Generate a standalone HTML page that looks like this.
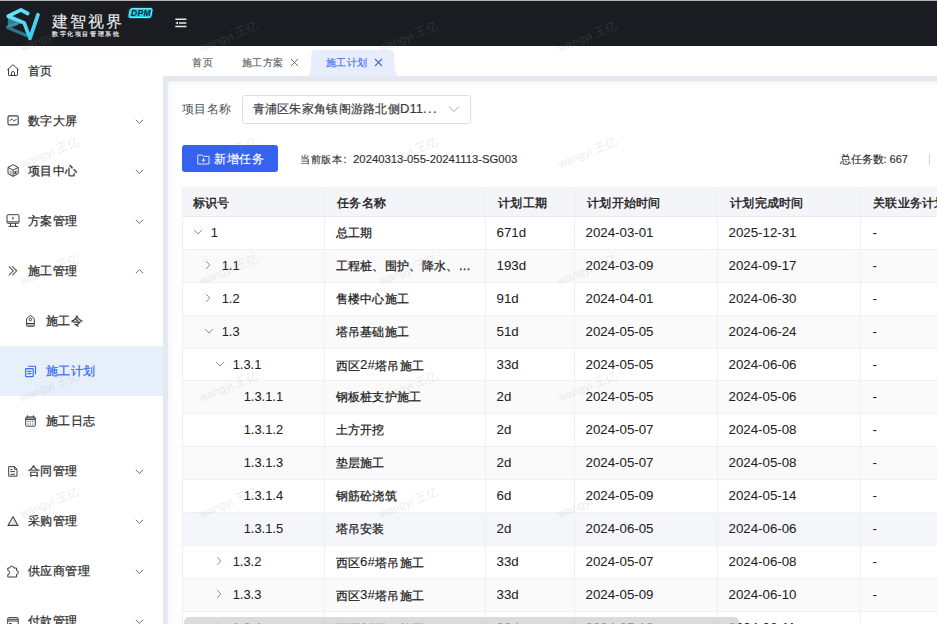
<!DOCTYPE html>
<html><head><meta charset="utf-8">
<style>
*{box-sizing:border-box;margin:0;padding:0}
html,body{width:937px;height:624px;overflow:hidden;background:#fff;font-family:"Liberation Sans",sans-serif;color:#303133}
.abs{position:absolute}
#topline{left:0;top:0;width:937px;height:1px;background:#b4b4b4}
#header{left:0;top:1px;width:937px;height:45px;background:#1a1c21;z-index:5}
#hsep{left:163px;top:1px;width:1px;height:45px;background:#1e2025;z-index:6}
#sline{left:0;top:48px;width:163px;height:1px;background:#fbfbfb}
#side{left:0;top:45px;width:163px;height:579px;background:#fff}
.mi{position:absolute;left:0;width:163px;height:50px;font-size:12.25px;letter-spacing:0.4px;color:#2b2d30;-webkit-text-stroke:0.25px currentColor}
.mi .t{position:absolute;left:28px;top:0;line-height:50px;white-space:nowrap}
.mi svg.ic{position:absolute;left:0;top:0;width:40px;height:50px}
.mi svg.ch{position:absolute;left:135px;top:21px;width:9px;height:9px}
.sub .t{left:46px}
.mi.act{background:#e6effa;color:#3a6cf4}
#content{left:163px;top:45px;width:774px;height:579px;background:#e4e9f0}
#tabs{left:163px;top:45px;width:774px;height:31px;background:#fff}
.tab{position:absolute;top:50px;height:26px;font-size:10px;letter-spacing:0.55px;-webkit-text-stroke:0.15px currentColor;line-height:26px;color:#5a5e66;white-space:nowrap}
#card{left:168px;top:81px;width:780px;height:560px;background:linear-gradient(to right,#f8f8f9 0,#fbfbfc 3px,#fdfdfd 6px,#fff 9px);border-radius:3px 0 0 0}
#cardtop{left:168px;top:81px;width:780px;height:5px;background:linear-gradient(to bottom,rgba(240,241,243,0.8),rgba(255,255,255,0));border-radius:3px 0 0 0}
.thead{background:#f3f5f9;border-bottom:1px solid #e8ebf2}
.th{font-size:12.25px;letter-spacing:0.3px;line-height:32px;color:#1f2022;white-space:nowrap;-webkit-text-stroke:0.4px currentColor}
.tr{left:182px;width:760px;height:32.875px;border-bottom:1px solid #eef1f6;background:#fff}
.tr.stripe{background:#fafafa}
.tr.hover{background:#f4f6fa}
.td{font-size:12.25px;letter-spacing:0.3px;line-height:33px;color:#222;white-space:nowrap;-webkit-text-stroke:0.25px currentColor}
.n{font-size:13px}
.td .n{position:relative;top:-1px;letter-spacing:0;font-size:13.3px;-webkit-text-stroke:0.05px currentColor}
.vb{top:187px;width:1px;height:437px;background:#edf0f5}
#wm{position:absolute;left:0;top:0;width:937px;height:624px;pointer-events:none;overflow:hidden;z-index:10}
.wmk{position:absolute;font-size:11.5px;line-height:11px;white-space:nowrap;color:rgba(150,150,150,0.2);transform:rotate(-22deg);transform-origin:0 9.3px}

</style></head><body>
<div id="topline" class="abs"></div>
<div id="header" class="abs">
  <svg class="abs" style="left:0;top:-1px" width="48" height="46" viewBox="0 0 48 46">
    <defs>
      <linearGradient id="lg" x1="0" y1="0" x2="1" y2="1"><stop offset="0" stop-color="#6ee8f8"/><stop offset="1" stop-color="#36c8ec"/></linearGradient>
      <linearGradient id="lg2" x1="0" y1="0" x2="1" y2="0.3"><stop offset="0" stop-color="#3aa6bd" stop-opacity="0.6"/><stop offset="1" stop-color="#2f97ad" stop-opacity="0.75"/></linearGradient>
    </defs>
    <path d="M8,16.5 L23.5,22.8 L7.6,27.4 Z" fill="#3aa9c0" opacity="0.7"/>
    <path d="M18,23.2 L7.6,27.4 L27,35.8" fill="none" stroke="url(#lg2)" stroke-width="3.3" stroke-linejoin="round"/>
    <path d="M27.7,13.5 L21,9.9 L8.2,16.2 L24.2,22.9 L30,38.3 L38,14.7" fill="none" stroke="url(#lg)" stroke-width="3.7" stroke-linejoin="round" stroke-linecap="round"/>
  </svg>
  <div class="abs" style="left:51.5px;top:11px;font-size:16px;line-height:20px;color:#eef0f2;letter-spacing:2.1px;-webkit-text-stroke:0.1px #eef0f2;white-space:nowrap">建智视界</div>
  <div class="abs" style="left:52px;top:29px;font-size:6px;line-height:8px;color:#e4e6ea;letter-spacing:1.6px;-webkit-text-stroke:0.2px #e4e6ea;white-space:nowrap">数字化项目管理系统</div>
  <div class="abs" style="left:129.3px;top:7px;width:22.5px;height:10px;background:#20cfe8;border:1px solid #6ef0ff;border-radius:2.5px;transform:skewX(-10deg);box-shadow:0 0 2px rgba(80,230,255,0.6)"></div>
  <div class="abs" style="left:130px;top:7px;width:22px;height:10px;font-size:8.5px;line-height:10px;font-weight:bold;font-style:italic;color:#06262e;text-align:center;letter-spacing:0.3px">DPM</div>
  <svg class="abs" style="left:174px;top:16px" width="14" height="13" viewBox="0 0 14 13">
    <path d="M1.3,2.3 H12.4 M5,5.9 H12.4 M1.3,9.5 H12.4" stroke="#e6e6e6" stroke-width="1.5"/>
    <path d="M4,4.4 L1.3,5.9 L4,7.4 Z" fill="#e6e6e6"/>
  </svg>
</div>
<div id="hsep" class="abs"></div>

<div id="side" class="abs">
<div class="mi" style="top:1px"><svg class="ic" width="40" height="50" viewBox="0 0 40 50"><path d="M7.3,23.9 L13,18.7 L18.7,23.9 M8.5,22.8 V28.9 Q8.5,29.5 9.1,29.5 H16.9 Q17.5,29.5 17.5,28.9 V22.8 M11.5,29.5 V26.9 A1.5,1.4 0 0 1 14.5,26.9 V29.5" fill="none" stroke="#3c3f44" stroke-width="1"/></svg><span class="t">首页</span></div>
<div class="mi" style="top:51px"><svg class="ic" width="40" height="50" viewBox="0 0 40 50"><rect x="8" y="19.8" width="10.2" height="9.1" rx="1.5" fill="none" stroke="#3c3f44" stroke-width="1.15"/><path d="M10,24.9 C11,22.6 12.1,22.6 13,24.1 C13.9,25.6 15.2,25.2 16.4,22.9" fill="none" stroke="#3c3f44" stroke-width="1"/></svg><span class="t">数字大屏</span><svg class="ch" viewBox="0 0 9 9"><path d="M0.8,2.8 L4.5,6.3 L8.2,2.8" fill="none" stroke="#6b6e73" stroke-width="1"/></svg></div>
<div class="mi" style="top:101px"><svg class="ic" width="40" height="50" viewBox="0 0 40 50"><path d="M13.1,18.6 L18.2,21.4 V27.6 L13.1,30.4 L8,27.6 V21.4 Z M8,21.4 L13.1,24.2 L18.2,21.4 M13.1,24.2 V30.4" fill="none" stroke="#3c3f44" stroke-width="1"/><path d="M14.4,25.6 L16.6,24.4 V27.2 L14.4,28.4 Z" fill="#3c3f44"/><path d="M11.6,25.6 C10,24.8 9.6,26.6 10.6,27 C11.6,27.4 11.4,28.6 9.8,28" fill="none" stroke="#3c3f44" stroke-width="0.7"/></svg><span class="t">项目中心</span><svg class="ch" viewBox="0 0 9 9"><path d="M0.8,2.8 L4.5,6.3 L8.2,2.8" fill="none" stroke="#6b6e73" stroke-width="1"/></svg></div>
<div class="mi" style="top:151px"><svg class="ic" width="40" height="50" viewBox="0 0 40 50"><rect x="7" y="18.7" width="12" height="8.6" rx="1" fill="none" stroke="#3c3f44" stroke-width="1"/><path d="M7.2,25.8 H18.8" stroke="#3c3f44" stroke-width="1.4" opacity="0.7"/><path d="M10.5,27.3 V30.2 M15.5,27.3 V30.2 M8.5,30.4 H18" fill="none" stroke="#3c3f44" stroke-width="1"/><path d="M12.2,20.6 L14.4,22.2 L12.2,23.8 Z" fill="#3c3f44" opacity="0.85"/></svg><span class="t">方案管理</span><svg class="ch" viewBox="0 0 9 9"><path d="M0.8,2.8 L4.5,6.3 L8.2,2.8" fill="none" stroke="#6b6e73" stroke-width="1"/></svg></div>
<div class="mi" style="top:201px"><svg class="ic" width="40" height="50" viewBox="0 0 40 50"><path d="M8.8,20.3 L13.3,24.85 L8.8,29.4 M12.2,20.3 L16.7,24.85 L12.2,29.4" fill="none" stroke="#55585d" stroke-width="1.1"/></svg><span class="t">施工管理</span><svg class="ch" viewBox="0 0 9 9"><path d="M0.8,6.3 L4.5,2.8 L8.2,6.3" fill="none" stroke="#6b6e73" stroke-width="1"/></svg></div>
<div class="mi sub" style="top:251px"><svg class="ic" width="40" height="50" viewBox="0 0 40 50"><path d="M26.6,29.7 V22.6 L30.45,19.4 L34.3,22.6 V29.7 Q34.3,30.3 33.7,30.3 H27.2 Q26.6,30.3 26.6,29.7 Z M26.6,27.5 H34.3" fill="none" stroke="#3c3f44" stroke-width="1"/><rect x="27" y="27.8" width="6.9" height="2.2" fill="#3c3f44" opacity="0.35"/><circle cx="30.4" cy="23.4" r="1.3" fill="none" stroke="#3c3f44" stroke-width="1"/></svg><span class="t">施工令</span></div>
<div class="mi sub act" style="top:301px"><svg class="ic" width="40" height="50" viewBox="0 0 40 50"><rect x="25.7" y="22.6" width="7.5" height="8" rx="0.6" fill="none" stroke="#3a6cf4" stroke-width="1.2"/><path d="M28.2,20.2 H34.9 Q35.5,20.2 35.5,20.8 V28.2 M27.4,25.4 H31.4 M27.4,27.6 H31.4" fill="none" stroke="#3a6cf4" stroke-width="1.1"/></svg><span class="t">施工计划</span></div>
<div class="mi sub" style="top:351px"><svg class="ic" width="40" height="50" viewBox="0 0 40 50"><rect x="25.7" y="20.9" width="9.6" height="9.3" rx="0.8" fill="none" stroke="#3c3f44" stroke-width="1"/><rect x="26" y="21.2" width="9" height="2.4" fill="#3c3f44" opacity="0.55"/><path d="M25.7,23.6 H35.3 M27.6,19.3 V21.5 M33.4,19.3 V21.5" fill="none" stroke="#3c3f44" stroke-width="1"/><path d="M27.4,25 h1.3v1h-1.3z M29.7,25 h1.3v1h-1.3z M32.1,25 h1.3v1h-1.3z M27.4,27.4 h1.3v1h-1.3z M29.7,27.4 h1.3v1h-1.3z M32.1,27.4 h1.3v1h-1.3z" fill="#3c3f44" opacity="0.8"/></svg><span class="t">施工日志</span></div>
<div class="mi" style="top:401px"><svg class="ic" width="40" height="50" viewBox="0 0 40 50"><path d="M8.7,20.6 H14.4 L17,23.2 V30.2 H8.7 Z M14.4,20.6 V23.2 H17" fill="none" stroke="#3c3f44" stroke-width="1"/><path d="M10.3,23.4 H12.5 M10.3,25.6 H14.9 M10.3,28.3 H14.9" fill="none" stroke="#3c3f44" stroke-width="1"/></svg><span class="t">合同管理</span><svg class="ch" viewBox="0 0 9 9"><path d="M0.8,2.8 L4.5,6.3 L8.2,2.8" fill="none" stroke="#6b6e73" stroke-width="1"/></svg></div>
<div class="mi" style="top:451px"><svg class="ic" width="40" height="50" viewBox="0 0 40 50"><path d="M13,20.7 L18,29.4 H8 Z" fill="none" stroke="#3c3f44" stroke-width="1.1" stroke-linejoin="round"/><path d="M13.6,23.8 L15.2,27.6 H12.2 Z" fill="none" stroke="#3c3f44" stroke-width="0.6" opacity="0.35"/></svg><span class="t">采购管理</span><svg class="ch" viewBox="0 0 9 9"><path d="M0.8,2.8 L4.5,6.3 L8.2,2.8" fill="none" stroke="#6b6e73" stroke-width="1"/></svg></div>
<div class="mi" style="top:501px"><svg class="ic" width="40" height="50" viewBox="0 0 40 50"><path d="M7.8,22 H9.8 A1.9,1.9 0 1 1 13.6,22 H16.5 V24.6 A1.9,1.9 0 1 1 16.5,28.4 V31 H7.8 V28.4 A1.9,1.9 0 1 0 7.8,24.6 Z" fill="none" stroke="#3c3f44" stroke-width="1" stroke-linejoin="round"/></svg><span class="t">供应商管理</span><svg class="ch" viewBox="0 0 9 9"><path d="M0.8,2.8 L4.5,6.3 L8.2,2.8" fill="none" stroke="#6b6e73" stroke-width="1"/></svg></div>
<div class="mi" style="top:551px"><svg class="ic" width="40" height="50" viewBox="0 0 40 50"><rect x="7.7" y="21.6" width="10.5" height="10" rx="1" fill="none" stroke="#3c3f44" stroke-width="1"/><path d="M7.7,23.3 H18.2 M7.7,25 H18.2" fill="none" stroke="#3c3f44" stroke-width="1"/><rect x="9.1" y="27" width="2.6" height="1.6" fill="#3c3f44"/></svg><span class="t">付款管理</span><svg class="ch" viewBox="0 0 9 9"><path d="M0.8,2.8 L4.5,6.3 L8.2,2.8" fill="none" stroke="#6b6e73" stroke-width="1"/></svg></div>
</div>
<div id="sline" class="abs"></div>
<div id="content" class="abs"></div>
<div id="tabs" class="abs"></div>
<svg class="abs" style="left:305px;top:49px" width="98" height="28" viewBox="0 0 98 28">
  <path d="M3,27 C4.5,26 5.5,22 6,17 L6.5,5 Q6.8,1 10.5,1 H85 Q88.7,1 89,5 L89.5,17 C90,22 91.5,26 93.5,27 Z" fill="#e8edfd"/>
</svg>
<div class="tab" style="left:192px">首页</div>
<div class="tab" style="left:241.5px">施工方案</div>
<svg class="abs" style="left:290px;top:58px" width="9" height="9" viewBox="0 0 9 9"><path d="M1,1 L8,8 M8,1 L1,8" stroke="#6a6d73" stroke-width="1"/></svg>
<div class="tab" style="left:325.5px;color:#3b6cf2">施工计划</div>
<svg class="abs" style="left:374px;top:58px" width="9" height="9" viewBox="0 0 9 9"><path d="M1,1 L8,8 M8,1 L1,8" stroke="#3b6cf2" stroke-width="1.1"/></svg>
<div id="card" class="abs"></div>
<div id="cardtop" class="abs"></div>
<div class="abs" style="left:181.5px;top:95px;letter-spacing:0.6px;font-size:12.25px;line-height:28px;color:#505358;white-space:nowrap">项目名称</div>
<div class="abs" style="left:242px;top:95px;width:229px;height:28.5px;border:1px solid #dcdfe6;border-radius:3px;background:#fff"></div>
<div class="abs" style="left:252.5px;top:95px;letter-spacing:0.3px;font-size:12.25px;line-height:28px;color:#3a3d42;white-space:nowrap;-webkit-text-stroke:0.2px currentColor">青浦区朱家角镇阁游路北侧<span class="n" style="letter-spacing:0">D11<span style="letter-spacing:1.4px">...</span></span></div>
<svg class="abs" style="left:448px;top:104px" width="12" height="10" viewBox="0 0 12 10"><path d="M1,2.5 L6,7.5 L11,2.5" fill="none" stroke="#a8abb2" stroke-width="1"/></svg>
<div class="abs" style="left:182px;top:145px;width:96px;height:27px;border-radius:3px;background:#3563f0"></div>
<svg class="abs" style="left:196.5px;top:153.5px" width="13" height="11" viewBox="0 0 13 11"><path d="M0.8,1 H5 L6.2,2.3 H12 V10 H0.8 Z" fill="none" stroke="#e6ecff" stroke-width="1"/><path d="M6.5,4.2 V8.2 M4.5,6.2 H8.5" stroke="#e6ecff" stroke-width="1"/></svg>
<div class="abs" style="left:214px;top:146px;letter-spacing:0.5px;font-size:12.25px;line-height:27px;color:#fff;-webkit-text-stroke:0.15px #fff;white-space:nowrap">新增任务</div>
<div class="abs" style="left:300px;top:146px;font-size:10.4px;letter-spacing:0.5px;line-height:27px;color:#2f3033;white-space:nowrap;-webkit-text-stroke:0.15px currentColor">当前版本<span style="font-size:11px;margin-left:1.5px;letter-spacing:0">:</span><span style="font-size:11.3px;margin-left:6.5px;letter-spacing:0">20240313-055-20241113-SG003</span></div>
<div class="abs" style="left:839.5px;top:146px;font-size:10.8px;line-height:27px;color:#2f3033;white-space:nowrap;-webkit-text-stroke:0.15px currentColor">总任务数<span style="font-size:11px">: 667</span></div>
<div class="abs" style="left:929px;top:154px;width:1px;height:11px;background:#cfd2d8"></div>

<div id="tbl">
<div class="abs thead" style="left:182px;top:187px;width:760px;height:30px"></div>
<div class="abs th" style="left:192.5px;top:187px">标识号</div>
<div class="abs th" style="left:337px;top:187px">任务名称</div>
<div class="abs th" style="left:498px;top:187px">计划工期</div>
<div class="abs th" style="left:587px;top:187px">计划开始时间</div>
<div class="abs th" style="left:730px;top:187px">计划完成时间</div>
<div class="abs th" style="left:873px;top:187px">关联业务计划</div>
<div class="abs tr" style="top:217.000px"></div>
<div class="abs tr stripe" style="top:249.875px"></div>
<div class="abs tr" style="top:282.750px"></div>
<div class="abs tr stripe" style="top:315.625px"></div>
<div class="abs tr" style="top:348.500px"></div>
<div class="abs tr stripe" style="top:381.375px"></div>
<div class="abs tr" style="top:414.250px"></div>
<div class="abs tr stripe" style="top:447.125px"></div>
<div class="abs tr" style="top:480.000px"></div>
<div class="abs tr stripe hover" style="top:512.875px"></div>
<div class="abs tr" style="top:545.750px"></div>
<div class="abs tr stripe" style="top:578.625px"></div>
<div class="abs tr" style="top:611.500px"></div>
<svg class="abs tchev" style="left:192.70px;top:227.00px" width="10" height="10" viewBox="0 0 10 10"><path d="M1.2,3 L5,7 L8.8,3" fill="none" stroke="#8a8d92" stroke-width="1"/></svg><div class="abs td" style="left:210.70px;top:217.000px"><span class="n" style="font-size:12.9px">1</span></div><div class="abs td" style="left:335.5px;top:217.000px">总工期</div><div class="abs td" style="left:496.5px;top:217.000px"><span class="n">671d</span></div><div class="abs td" style="left:585.5px;top:217.000px"><span class="n">2024-03-01</span></div><div class="abs td" style="left:728.5px;top:217.000px"><span class="n">2025-12-31</span></div><div class="abs td" style="left:872.5px;top:217.000px"><span class="n">-</span></div>
<svg class="abs tchev" style="left:203.20px;top:259.88px" width="10" height="10" viewBox="0 0 10 10"><path d="M3.2,1.2 L6.8,5 L3.2,8.8" fill="none" stroke="#8a8d92" stroke-width="1"/></svg><div class="abs td" style="left:221.70px;top:249.875px"><span class="n" style="font-size:12.9px">1.1</span></div><div class="abs td" style="left:335.5px;top:249.875px">工程桩、围护、降水、…</div><div class="abs td" style="left:496.5px;top:249.875px"><span class="n">193d</span></div><div class="abs td" style="left:585.5px;top:249.875px"><span class="n">2024-03-09</span></div><div class="abs td" style="left:728.5px;top:249.875px"><span class="n">2024-09-17</span></div><div class="abs td" style="left:872.5px;top:249.875px"><span class="n">-</span></div>
<svg class="abs tchev" style="left:203.20px;top:292.75px" width="10" height="10" viewBox="0 0 10 10"><path d="M3.2,1.2 L6.8,5 L3.2,8.8" fill="none" stroke="#8a8d92" stroke-width="1"/></svg><div class="abs td" style="left:221.70px;top:282.750px"><span class="n" style="font-size:12.9px">1.2</span></div><div class="abs td" style="left:335.5px;top:282.750px">售楼中心施工</div><div class="abs td" style="left:496.5px;top:282.750px"><span class="n">91d</span></div><div class="abs td" style="left:585.5px;top:282.750px"><span class="n">2024-04-01</span></div><div class="abs td" style="left:728.5px;top:282.750px"><span class="n">2024-06-30</span></div><div class="abs td" style="left:872.5px;top:282.750px"><span class="n">-</span></div>
<svg class="abs tchev" style="left:203.70px;top:325.62px" width="10" height="10" viewBox="0 0 10 10"><path d="M1.2,3 L5,7 L8.8,3" fill="none" stroke="#8a8d92" stroke-width="1"/></svg><div class="abs td" style="left:221.70px;top:315.625px"><span class="n" style="font-size:12.9px">1.3</span></div><div class="abs td" style="left:335.5px;top:315.625px">塔吊基础施工</div><div class="abs td" style="left:496.5px;top:315.625px"><span class="n">51d</span></div><div class="abs td" style="left:585.5px;top:315.625px"><span class="n">2024-05-05</span></div><div class="abs td" style="left:728.5px;top:315.625px"><span class="n">2024-06-24</span></div><div class="abs td" style="left:872.5px;top:315.625px"><span class="n">-</span></div>
<svg class="abs tchev" style="left:214.70px;top:358.50px" width="10" height="10" viewBox="0 0 10 10"><path d="M1.2,3 L5,7 L8.8,3" fill="none" stroke="#8a8d92" stroke-width="1"/></svg><div class="abs td" style="left:232.70px;top:348.500px"><span class="n" style="font-size:12.9px">1.3.1</span></div><div class="abs td" style="left:335.5px;top:348.500px">西区<span class="n">2#</span>塔吊施工</div><div class="abs td" style="left:496.5px;top:348.500px"><span class="n">33d</span></div><div class="abs td" style="left:585.5px;top:348.500px"><span class="n">2024-05-05</span></div><div class="abs td" style="left:728.5px;top:348.500px"><span class="n">2024-06-06</span></div><div class="abs td" style="left:872.5px;top:348.500px"><span class="n">-</span></div>
<div class="abs td" style="left:243.70px;top:381.375px"><span class="n" style="font-size:12.9px">1.3.1.1</span></div><div class="abs td" style="left:335.5px;top:381.375px">钢板桩支护施工</div><div class="abs td" style="left:496.5px;top:381.375px"><span class="n">2d</span></div><div class="abs td" style="left:585.5px;top:381.375px"><span class="n">2024-05-05</span></div><div class="abs td" style="left:728.5px;top:381.375px"><span class="n">2024-05-06</span></div><div class="abs td" style="left:872.5px;top:381.375px"><span class="n">-</span></div>
<div class="abs td" style="left:243.70px;top:414.250px"><span class="n" style="font-size:12.9px">1.3.1.2</span></div><div class="abs td" style="left:335.5px;top:414.250px">土方开挖</div><div class="abs td" style="left:496.5px;top:414.250px"><span class="n">2d</span></div><div class="abs td" style="left:585.5px;top:414.250px"><span class="n">2024-05-07</span></div><div class="abs td" style="left:728.5px;top:414.250px"><span class="n">2024-05-08</span></div><div class="abs td" style="left:872.5px;top:414.250px"><span class="n">-</span></div>
<div class="abs td" style="left:243.70px;top:447.125px"><span class="n" style="font-size:12.9px">1.3.1.3</span></div><div class="abs td" style="left:335.5px;top:447.125px">垫层施工</div><div class="abs td" style="left:496.5px;top:447.125px"><span class="n">2d</span></div><div class="abs td" style="left:585.5px;top:447.125px"><span class="n">2024-05-07</span></div><div class="abs td" style="left:728.5px;top:447.125px"><span class="n">2024-05-08</span></div><div class="abs td" style="left:872.5px;top:447.125px"><span class="n">-</span></div>
<div class="abs td" style="left:243.70px;top:480.000px"><span class="n" style="font-size:12.9px">1.3.1.4</span></div><div class="abs td" style="left:335.5px;top:480.000px">钢筋砼浇筑</div><div class="abs td" style="left:496.5px;top:480.000px"><span class="n">6d</span></div><div class="abs td" style="left:585.5px;top:480.000px"><span class="n">2024-05-09</span></div><div class="abs td" style="left:728.5px;top:480.000px"><span class="n">2024-05-14</span></div><div class="abs td" style="left:872.5px;top:480.000px"><span class="n">-</span></div>
<div class="abs td" style="left:243.70px;top:512.875px"><span class="n" style="font-size:12.9px">1.3.1.5</span></div><div class="abs td" style="left:335.5px;top:512.875px">塔吊安装</div><div class="abs td" style="left:496.5px;top:512.875px"><span class="n">2d</span></div><div class="abs td" style="left:585.5px;top:512.875px"><span class="n">2024-06-05</span></div><div class="abs td" style="left:728.5px;top:512.875px"><span class="n">2024-06-06</span></div><div class="abs td" style="left:872.5px;top:512.875px"><span class="n">-</span></div>
<svg class="abs tchev" style="left:214.20px;top:555.75px" width="10" height="10" viewBox="0 0 10 10"><path d="M3.2,1.2 L6.8,5 L3.2,8.8" fill="none" stroke="#8a8d92" stroke-width="1"/></svg><div class="abs td" style="left:232.70px;top:545.750px"><span class="n" style="font-size:12.9px">1.3.2</span></div><div class="abs td" style="left:335.5px;top:545.750px">西区<span class="n">6#</span>塔吊施工</div><div class="abs td" style="left:496.5px;top:545.750px"><span class="n">33d</span></div><div class="abs td" style="left:585.5px;top:545.750px"><span class="n">2024-05-07</span></div><div class="abs td" style="left:728.5px;top:545.750px"><span class="n">2024-06-08</span></div><div class="abs td" style="left:872.5px;top:545.750px"><span class="n">-</span></div>
<svg class="abs tchev" style="left:214.20px;top:588.62px" width="10" height="10" viewBox="0 0 10 10"><path d="M3.2,1.2 L6.8,5 L3.2,8.8" fill="none" stroke="#8a8d92" stroke-width="1"/></svg><div class="abs td" style="left:232.70px;top:578.625px"><span class="n" style="font-size:12.9px">1.3.3</span></div><div class="abs td" style="left:335.5px;top:578.625px">西区<span class="n">3#</span>塔吊施工</div><div class="abs td" style="left:496.5px;top:578.625px"><span class="n">33d</span></div><div class="abs td" style="left:585.5px;top:578.625px"><span class="n">2024-05-09</span></div><div class="abs td" style="left:728.5px;top:578.625px"><span class="n">2024-06-10</span></div><div class="abs td" style="left:872.5px;top:578.625px"><span class="n">-</span></div>
<svg class="abs tchev" style="left:214.20px;top:621.50px" width="10" height="10" viewBox="0 0 10 10"><path d="M3.2,1.2 L6.8,5 L3.2,8.8" fill="none" stroke="#8a8d92" stroke-width="1"/></svg><div class="abs td" style="left:232.70px;top:611.500px"><span class="n" style="font-size:12.9px">1.3.4</span></div><div class="abs td" style="left:335.5px;top:611.500px">西区<span class="n">1#</span>塔吊施工</div><div class="abs td" style="left:496.5px;top:611.500px"><span class="n">33d</span></div><div class="abs td" style="left:585.5px;top:611.500px"><span class="n">2024-05-10</span></div><div class="abs td" style="left:728.5px;top:611.500px"><span class="n">2024-06-11</span></div><div class="abs td" style="left:872.5px;top:611.500px"><span class="n">-</span></div>
<div class="abs vb" style="left:324px"></div>
<div class="abs vb" style="left:485px"></div>
<div class="abs vb" style="left:574px"></div>
<div class="abs vb" style="left:717px"></div>
<div class="abs vb" style="left:860px"></div>
<div class="abs vb" style="left:182px"></div>
<div class="abs" style="left:184px;top:617px;width:555px;height:12px;border-radius:5px;background:rgba(203,204,207,0.7)"></div>
</div>
<div id="wm"><div class="wmk" style="left:21.8px;top:42.7px">wangyi 王亿</div><div class="wmk" style="left:201.3px;top:42.7px">wangyi 王亿</div><div class="wmk" style="left:380.8px;top:42.7px">wangyi 王亿</div><div class="wmk" style="left:560.3px;top:42.7px">wangyi 王亿</div><div class="wmk" style="left:21.8px;top:159.3px">wangyi 王亿</div><div class="wmk" style="left:201.3px;top:159.3px">wangyi 王亿</div><div class="wmk" style="left:380.8px;top:159.3px">wangyi 王亿</div><div class="wmk" style="left:560.3px;top:159.3px">wangyi 王亿</div><div class="wmk" style="left:21.8px;top:275.9px">wangyi 王亿</div><div class="wmk" style="left:201.3px;top:275.9px">wangyi 王亿</div><div class="wmk" style="left:380.8px;top:275.9px">wangyi 王亿</div><div class="wmk" style="left:560.3px;top:275.9px">wangyi 王亿</div><div class="wmk" style="left:21.8px;top:392.5px">wangyi 王亿</div><div class="wmk" style="left:201.3px;top:392.5px">wangyi 王亿</div><div class="wmk" style="left:380.8px;top:392.5px">wangyi 王亿</div><div class="wmk" style="left:560.3px;top:392.5px">wangyi 王亿</div><div class="wmk" style="left:21.8px;top:509.1px">wangyi 王亿</div><div class="wmk" style="left:201.3px;top:509.1px">wangyi 王亿</div><div class="wmk" style="left:380.8px;top:509.1px">wangyi 王亿</div><div class="wmk" style="left:560.3px;top:509.1px">wangyi 王亿</div></div>
</body></html>
